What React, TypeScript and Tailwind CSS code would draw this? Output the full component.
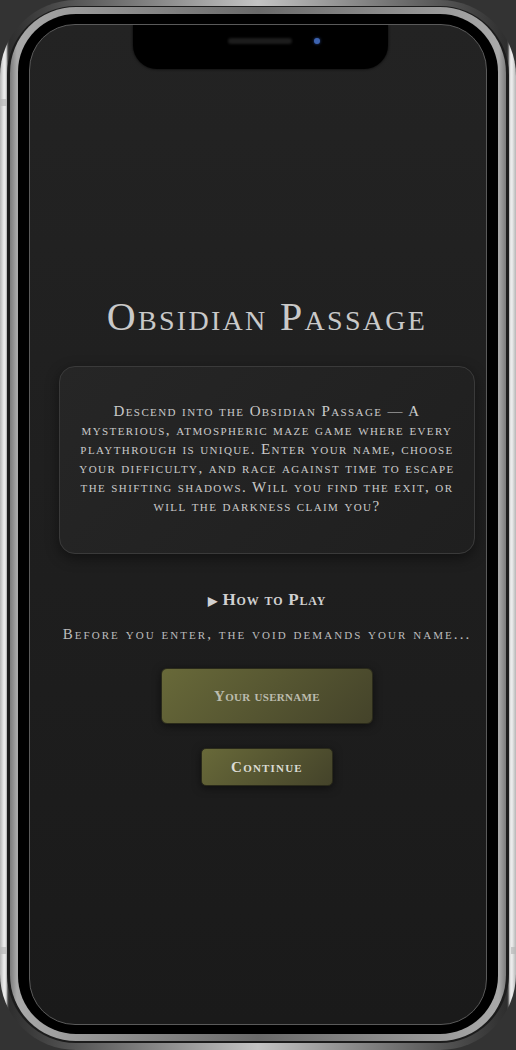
import React, { useState } from 'react';

const serif = "font-['Liberation_Serif',serif] [font-variant:small-caps]";

const lines = [
  'Descend into the Obsidian Passage — A',
  'mysterious, atmospheric maze game where every',
  'playthrough is unique. Enter your name, choose',
  'your difficulty, and race against time to escape',
  'the shifting shadows. Will you find the exit, or',
  'will the darkness claim you?',
];

const Notch: React.FC = () => (
  <div className="absolute inset-x-0 top-0 flex justify-center">
    <div className="ml-[5px] flex h-[44px] w-[255px] items-start gap-[22px] rounded-b-[24px] bg-black pl-[95px] pt-[13px] shadow-[0_0_3px_rgba(0,0,0,0.9)]">
      <div className="h-[6px] w-[64px] rounded-full bg-[#1c1c1c] blur-[1px]" />
      <div className="h-[6px] w-[6px] rounded-full bg-[#3d63b0] shadow-[0_0_3px_#2a4a90]" />
    </div>
  </div>
);

const App: React.FC = () => {
  const [name, setName] = useState('');

  return (
    <div className="relative h-[1050px] w-[516px] overflow-hidden bg-[#333]">
      {/* side buttons */}
      <div className="absolute left-0 top-[99px] z-10 h-[7px] w-[7px] bg-[#b8b8b8]/70" />
      <div className="absolute left-0 top-[947px] z-10 h-[7px] w-[7px] bg-[#b8b8b8]/70" />
      <div className="absolute right-0 top-[947px] z-10 h-[7px] w-[5px] bg-[#b8b8b8]/70" />

      <div className="h-full w-full rounded-[76px] bg-[linear-gradient(90deg,#b5b5b5,#eeeeee_0.8%,#dcdcdc_1.2%,#7a7a7a_1.4%,#2e2e2e_1.7%,#c4c4c4_50%,#2e2e2e_98.3%,#7a7a7a_98.6%,#dcdcdc_98.8%,#eeeeee_99.2%,#b5b5b5)] px-[7px] pb-[7px] pt-[6px]">
        <div className="h-full w-full rounded-[69px] bg-[#1c1c1c] px-[3px] pb-[2px] pt-[1px]">
          <div className="h-full w-full rounded-[66px] bg-[linear-gradient(90deg,#7a7a7a,#a9a9a9_1.4%,#6a6a6a_50%,#a9a9a9_98.6%,#7a7a7a)] px-[8px] pb-[7px] pt-[7px]">
            <div className="h-full w-full rounded-[58px] bg-black px-[11px] pb-[9px] pt-[10px]">
              <div className="relative h-full w-full overflow-hidden rounded-[46px] border border-[#5a5a5a] bg-[linear-gradient(180deg,#232323,#1a1a1a)]">
                <Notch />
                <div className="flex flex-col items-center pl-[18px] pt-[272px]">
                  <h1 className={`${serif} text-[40px] leading-[40px] tracking-[2.3px] text-[#c9c9c9]`}>
                    Obsidian Passage
                  </h1>

                  <div className="mt-[29px] w-[416px] rounded-[16px] border border-[#3a3a3a] bg-[linear-gradient(135deg,#262626,#1f1f1f)] pb-[37px] pt-[35px] shadow-[0_4px_14px_rgba(0,0,0,0.45)]">
                    <p className={`${serif} text-center text-[15px] leading-[19px] tracking-[1.4px] text-[#cacaca]`}>
                      {lines.map((l, i) => (
                        <React.Fragment key={i}>
                          {l}
                          {i < lines.length - 1 && <br />}
                        </React.Fragment>
                      ))}
                    </p>
                  </div>

                  <details className="mt-[34px]">
                    <summary className={`${serif} list-none text-[17px] font-bold leading-[24px] tracking-[0.8px] text-[#d0d0d0]`}>
                      <span className="mr-[5px] text-[12px]">▶</span>How to Play
                    </summary>
                  </details>

                  <p className={`${serif} mt-[10px] text-[15px] leading-[22px] tracking-[2.05px] text-[#bdbdbd]`}>
                    Before you enter, the void demands your name...
                  </p>

                  <input
                    value={name}
                    onChange={e => setName(e.target.value)}
                    placeholder="Your username"
                    className={`${serif} mt-[23px] h-[56px] w-[212px] rounded-[6px] border border-[#2a2a1a] bg-[linear-gradient(135deg,#686939,#44432a)] text-center text-[15px] font-bold tracking-[0.3px] text-[#ddd] shadow-[0_2px_8px_rgba(0,0,0,0.5)] outline-none placeholder:text-[#bcbcae]`}
                  />

                  <button className={`${serif} mt-[24px] h-[38px] w-[132px] rounded-[5px] border border-[#2a2a1a] bg-[linear-gradient(135deg,#686939,#44432a)] text-[15px] font-bold tracking-[1.2px] text-[#dcdcd4] shadow-[0_2px_8px_rgba(0,0,0,0.5)]`}>
                    Continue
                  </button>
                </div>
              </div>
            </div>
          </div>
        </div>
      </div>
    </div>
  );
};

export default App;
